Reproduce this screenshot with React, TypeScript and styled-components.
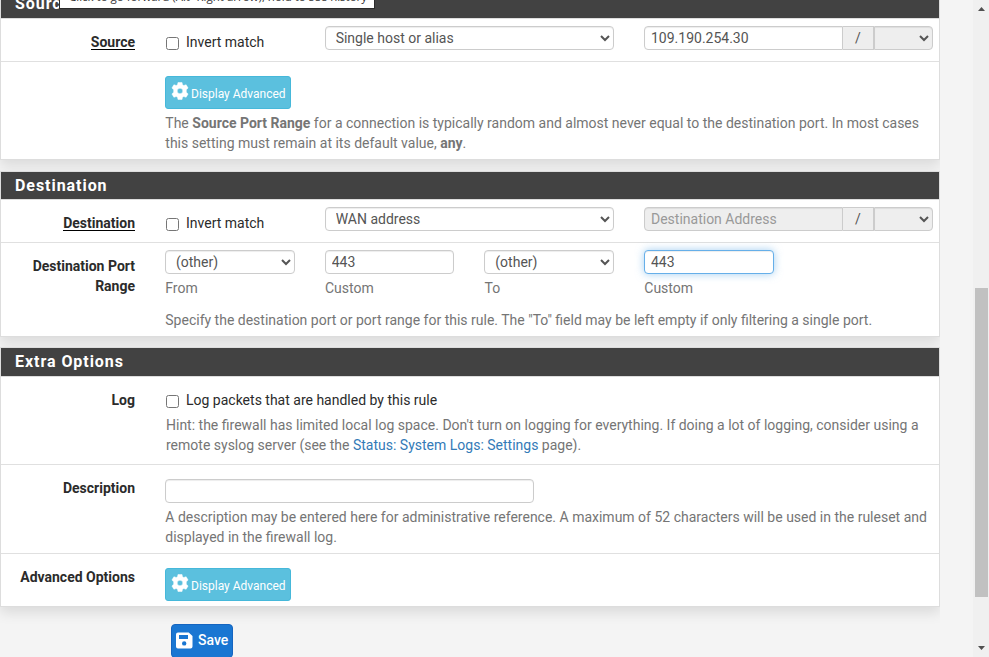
import React from "react";
import styled, { createGlobalStyle, css } from "styled-components";

const GlobalStyle = createGlobalStyle`
  *, *::before, *::after { box-sizing: border-box; }
  html, body { margin: 0; height: 657px; overflow: hidden; background: #f4f4f4; }
  body { font: 400 14px/20px Roboto, "Liberation Sans", sans-serif; color: #2b2b2b; }
`;

const Window = styled.div`
  display: flex;
  width: 989px;
  height: 657px;
  overflow: hidden;
`;

const Content = styled.main`
  width: 940px;
  height: 657px;
  overflow: hidden;
  position: relative;
`;

const Panel = styled.section<{ $height: number; $gap: number }>`
  height: ${(p) => p.$height}px;
  margin-bottom: ${(p) => p.$gap}px;
  background: #fff;
  border: 1px solid #ddd;
  box-shadow: 0 6px 12px rgba(0, 0, 0, 0.1);
`;

const SourcePanel = styled(Panel)`
  margin-top: -11px;
`;

const Heading = styled.h2<{ $height: number }>`
  height: ${(p) => p.$height}px;
  margin: 0;
  padding-left: 14px;
  background: #424242;
  color: #fff;
  border-bottom: 1px solid #ddd;
  font-size: 16px;
  font-weight: 700;
  letter-spacing: 0.95px;
  line-height: 28px;
`;

const Row = styled.div<{ $height: number; $last?: boolean }>`
  display: flex;
  height: ${(p) => p.$height}px;
  border-bottom: ${(p) => (p.$last ? "0" : "1px solid #e0e0e0")};
`;

const Label = styled.div<{ $top: number }>`
  width: 134px;
  margin-right: 30px;
  flex: none;
  padding-top: ${(p) => p.$top}px;
  font-weight: 700;
  text-align: right;
`;

const Required = styled.span`
  display: inline-block;
  height: 18px;
  border-bottom: 1px solid #000;
`;

const Body = styled.div<{ $top: number }>`
  padding-top: ${(p) => p.$top}px;
  width: 768px;
`;

const Columns = styled.div`
  display: grid;
  grid-template-columns: 129.67px 129.67px 129.67px 129.67px;
  column-gap: 30px;
`;

const AddressColumns = styled.div`
  display: grid;
  grid-template-columns: 129.67px 289.33px 289px;
  column-gap: 30px;
`;

const CheckLabel = styled.label<{ $top: number }>`
  display: flex;
  align-items: flex-start;
  padding-top: ${(p) => p.$top}px;
  white-space: nowrap;
`;

const Checkbox = styled.input.attrs({ type: "checkbox" })`
  width: 13px;
  height: 13px;
  margin: 5px 7px 0 1px;
`;

const control = css`
  display: block;
  width: 100%;
  height: 24px;
  margin: 0;
  padding: 0 6px;
  border: 1px solid #ccc;
  border-radius: 4px;
  background: #fff;
  color: #555;
  font: 400 14px/20px Roboto, "Liberation Sans", sans-serif;
  box-shadow: inset 0 1px 1px rgba(0, 0, 0, 0.075);
  outline: none;
`;

const Input = styled.input<{ $focused?: boolean }>`
  ${control}
  padding-bottom: 1px;
  ${(p) =>
    p.$focused &&
    css`
      border-color: #66afe9;
      box-shadow: inset 0 1px 1px rgba(0, 0, 0, 0.075), 0 0 8px rgba(102, 175, 233, 0.6);
    `}
  &::placeholder { color: #999; opacity: 1; }
  &:disabled { background: #eee; }
`;

const DescriptionInput = styled(Input)`
  width: 369px;
`;

const Select = styled.select`
  ${control}
  &:disabled { background: #eee; opacity: 1; }
`;

const AddressGroup = styled.div`
  display: grid;
  grid-template-columns: 199px 31px 59px;
  align-items: start;
  ${Input} { border-radius: 4px 0 0 4px; }
  ${Select} { border-radius: 0 4px 4px 0; }
`;

const Addon = styled.span`
  height: 24px;
  border: solid #ccc;
  border-width: 1px 1px 1px 0;
  background: #eee;
  color: #555;
  text-align: center;
  line-height: 22px;
`;

const Help = styled.p<{ $top: number; $indent?: number }>`
  margin: ${(p) => p.$top}px 0 0 ${(p) => p.$indent ?? 0.3}px;
  color: #757575;
  white-space: nowrap;
`;

const Link = styled.a`
  color: #337ab7;
  text-decoration: none;
`;

const InfoButton = styled.button`
  display: flex;
  align-items: center;
  width: 126px;
  height: 33px;
  padding: 0 0 0 4.5px;
  border: 1px solid #46b8da;
  border-radius: 3px;
  background: #5bc0de;
  color: #fff;
  font: 400 12px/18px Roboto, "Liberation Sans", sans-serif;
  white-space: nowrap;
  svg { flex: none; margin: -3px 2.5px 0 0; }
  span { padding-top: 2px; }
`;

const SaveButton = styled.button`
  display: flex;
  align-items: center;
  width: 62px;
  height: 34px;
  margin-left: 171px;
  padding: 0 0 2px 4px;
  border: 1px solid #1565c0;
  border-radius: 4px;
  background: #1976d2;
  color: #fff;
  font: 500 14px/20px Roboto, "Liberation Sans", sans-serif;
  svg { flex: none; margin-right: 5px; }
`;

const Tooltip = styled.div`
  position: absolute;
  left: 59px;
  top: -14px;
  width: 316px;
  height: 23px;
  padding-left: 9px;
  border: 1px solid #2b2b2b;
  background: #fff;
  color: #333;
  font: 11.5px/20px "Open Sans", "Noto Sans", sans-serif;
  white-space: nowrap;
`;

const Scrollbar = styled.div`
  display: flex;
  flex-direction: column;
  align-items: center;
  width: 16px;
  height: 657px;
  margin-left: 33px;
  background: #f0f0f0;
`;

const Arrow = styled.svg`
  display: block;
  width: 7px;
  height: 4px;
  margin: 7px 0 0;
  fill: #505050;
`;

const Thumb = styled.div`
  width: 13px;
  height: 309px;
  margin: 277px 0 42px;
  background: #c1c1c1;
`;

const Gear = () => (
  <svg width="18" height="18" viewBox="0 0 18 18">
    <path
      fill="#fff"
      stroke="#fff"
      strokeWidth="0.5"
      strokeLinejoin="round"
      fillRule="evenodd"
      d="M7 .4h4l.5 2.3 1.3.8 2.3-.8 2 3.4-1.8 1.6v2.6l1.8 1.6-2 3.4-2.3-.8-1.3.8-.5 2.3H7l-.5-2.3-1.3-.8-2.3.8-2-3.4 1.8-1.6V7.7L.9 6.1l2-3.4 2.3.8 1.3-.8zM9 6.2a2.8 2.8 0 1 0 0 5.6 2.8 2.8 0 0 0 0-5.6z"
    />
  </svg>
);

const Disk = () => (
  <svg width="17" height="17" viewBox="0 0 17 17">
    <path
      fill="#fff"
      fillRule="evenodd"
      d="M2 .5h10.7L16.5 4v10.5a2 2 0 0 1-2 2H2a2 2 0 0 1-2-2v-12a2 2 0 0 1 2-2zM3 3v4h9V3zM8.2 9.2a2.2 2.2 0 1 0 0 4.4 2.2 2.2 0 0 0 0-4.4z"
    />
  </svg>
);

const DisplayAdvanced = () => (
  <InfoButton>
    <Gear />
    <span>Display Advanced</span>
  </InfoButton>
);

function AddressRow({ name, type, address }: { name: string; type: string; address?: string }) {
  return (
    <Row $height={43}>
      <Label $top={13}>
        <Required>{name}</Required>
      </Label>
      <Body $top={7}>
        <AddressColumns>
          <CheckLabel $top={6}>
            <Checkbox />
            Invert match
          </CheckLabel>
          <Select>
            <option>{type}</option>
          </Select>
          <AddressGroup>
            <Input defaultValue={address} placeholder="Destination Address" disabled={!address} />
            <Addon>/</Addon>
            <Select disabled />
          </AddressGroup>
        </AddressColumns>
      </Body>
    </Row>
  );
}

export default function App() {
  return (
    <>
      <GlobalStyle />
      <Window>
        <Content>
          <SourcePanel $height={171} $gap={11}>
            <Heading $height={29}>Source</Heading>
            <AddressRow name="Source" type="Single host or alias" address="109.190.254.30" />
            <Row $height={97} $last>
              <Label $top={0} />
              <Body $top={14}>
                <DisplayAdvanced />
                <Help $top={4}>
                  The <b>Source Port Range</b> for a connection is typically random and almost never equal to the
                  destination port. In most cases
                  <br />
                  this setting must remain at its default value, <b>any</b>.
                </Help>
              </Body>
            </Row>
          </SourcePanel>

          <Panel $height={166} $gap={10}>
            <Heading $height={28}>Destination</Heading>
            <AddressRow name="Destination" type="WAN address" />
            <Row $height={93} $last>
              <Label $top={13}>Destination Port Range</Label>
              <Body $top={7}>
                <Columns>
                  <Select>
                    <option>(other)</option>
                  </Select>
                  <Input defaultValue="443" />
                  <Select>
                    <option>(other)</option>
                  </Select>
                  <Input defaultValue="443" $focused />
                  <Help $top={4}>From</Help>
                  <Help $top={4}>Custom</Help>
                  <Help $top={4}>To</Help>
                  <Help $top={4}>Custom</Help>
                </Columns>
                <Help $top={12}>
                  Specify the destination port or port range for this rule. The "To" field may be left empty if only
                  filtering a single port.
                </Help>
              </Body>
            </Row>
          </Panel>

          <Panel $height={260} $gap={17}>
            <Heading $height={29}>Extra Options</Heading>
            <Row $height={88}>
              <Label $top={13}>Log</Label>
              <Body $top={13}>
                <CheckLabel $top={0}>
                  <Checkbox />
                  Log packets that are handled by this rule
                </CheckLabel>
                <Help $top={5} $indent={1}>
                  Hint: the firewall has limited local log space. Don't turn on logging for everything. If doing a lot
                  of logging, consider using a
                  <br />
                  remote syslog server (see the <Link>Status: System Logs: Settings</Link> page).
                </Help>
              </Body>
            </Row>
            <Row $height={89}>
              <Label $top={13}>Description</Label>
              <Body $top={14}>
                <DescriptionInput />
                <Help $top={4}>
                  A description may be entered here for administrative reference. A maximum of 52 characters will be
                  used in the ruleset and
                  <br />
                  displayed in the firewall log.
                </Help>
              </Body>
            </Row>
            <Row $height={52} $last>
              <Label $top={13}>Advanced Options</Label>
              <Body $top={14}>
                <DisplayAdvanced />
              </Body>
            </Row>
          </Panel>

          <SaveButton>
            <Disk />
            Save
          </SaveButton>

          <Tooltip>Click to go forward (Alt+Right arrow), hold to see history</Tooltip>
        </Content>

        <Scrollbar>
          <Arrow viewBox="0 0 7 4">
            <path d="M0 4 3.5 0 7 4z" />
          </Arrow>
          <Thumb />
          <Arrow viewBox="0 0 7 4">
            <path d="M0 0 3.5 4 7 0z" />
          </Arrow>
        </Scrollbar>
      </Window>
    </>
  );
}
